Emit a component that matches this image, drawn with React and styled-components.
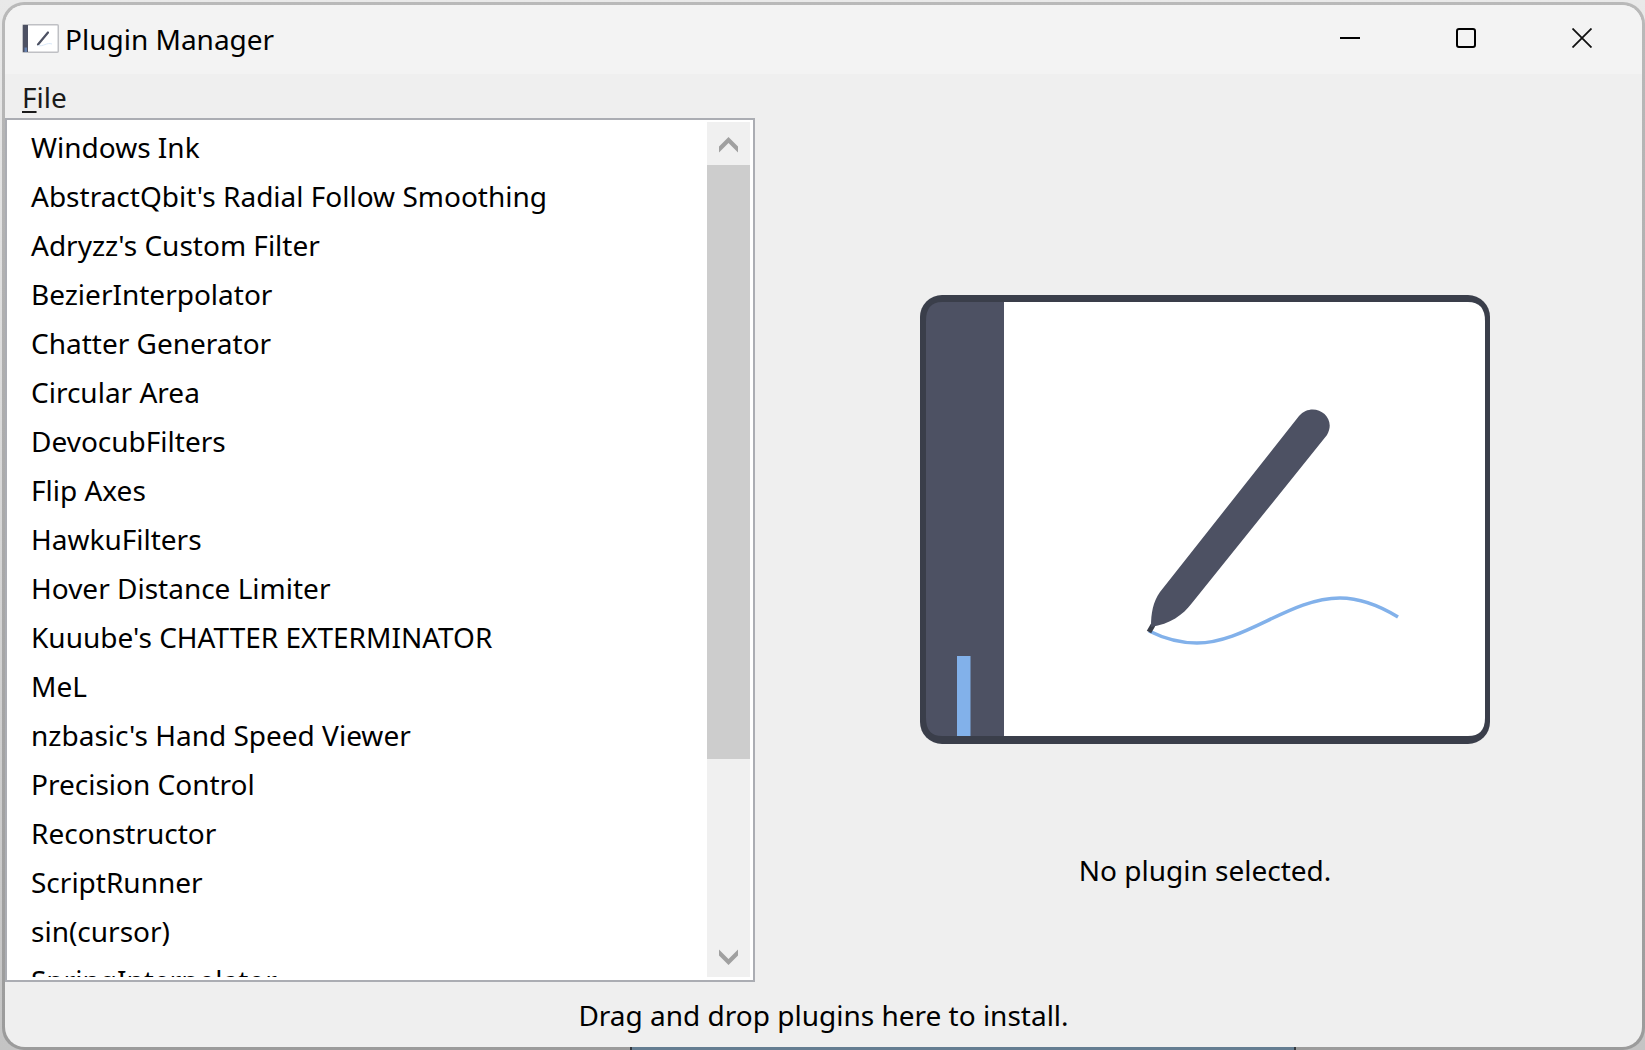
import React from "react";
import styled, { createGlobalStyle } from "styled-components";

const GlobalStyle = createGlobalStyle`
  * { box-sizing: border-box; }
  body { margin: 0; }
`;

const Desktop = styled.div`
  height: 100vh;
  min-height: 480px;
  padding: 2px 0 0 2px;
  background: linear-gradient(#e9e9e9, #c4c4c4);
  font-family: "Noto Sans", "Open Sans", sans-serif;
  font-size: 28px;
  line-height: 40px;
  color: #000;
`;

const Frame = styled.div`
  position: relative;
  height: 100%;
  padding: 3px;
  border-radius: 22px;
  background: linear-gradient(#b9b9b9, #9b9b9b);
`;

const Window = styled.main`
  display: flex;
  flex-direction: column;
  height: 100%;
  overflow: hidden;
  border-radius: 20px;
  background: #efefef;
`;

const TaskEdge = styled.div`
  position: absolute;
  bottom: 0;
  left: 38.25%;
  right: 21.25%;
  height: 3px;
  border: solid #35393f;
  border-width: 0 2px;
  background: #647d91;
`;

const TitleBar = styled.header`
  display: flex;
  flex: none;
  align-items: center;
  height: 69px;
  padding: 0 2px 2px 17px;
  background: #f3f3f3;
`;

const Title = styled.h1`
  flex: 1;
  margin: 0 0 0 6px;
  font: inherit;
`;

const CaptionButton = styled.button`
  display: grid;
  place-items: center;
  width: 116px;
  height: 67px;
  padding: 0 0 2px;
  border: 0;
  background: none;
`;

const MenuBar = styled.nav`
  display: flex;
  flex: none;
  height: 44px;
  padding: 1px 0 0 17px;
`;

const MenuButton = styled.button`
  padding: 0;
  border: 0;
  background: none;
  font: inherit;
  color: #1a1a1a;
  u { text-underline-offset: 3px; text-decoration-thickness: 2px; }
`;

const Content = styled.div`
  display: flex;
  flex: 1;
  min-height: 0;
`;

const ListBox = styled.div`
  display: flex;
  flex: 0 0 750px;
  padding: 2px 3px 3px 2px;
  border: 2px solid #abadb3;
  background: #fff;
`;

const PluginList = styled.ul`
  flex: 1;
  margin: 0;
  padding: 0;
  overflow: hidden;
  list-style: none;
`;

const PluginItem = styled.li`
  height: 49px;
  padding-left: 22px;
  line-height: 50px;
  white-space: nowrap;
`;

const ScrollBar = styled.div`
  display: flex;
  flex-direction: column;
  width: 43px;
  background: #f0f0f0;
`;

const ScrollButton = styled.button`
  display: grid;
  flex: none;
  place-items: center;
  height: 43px;
  padding: 2px 0 0;
  border: 0;
  background: none;
`;

const Track = styled.div`
  flex: 1;
`;

const Thumb = styled.div`
  height: 77.3%;
  background: #cdcdcd;
`;

const Details = styled.section`
  display: flex;
  flex: 1;
  flex-direction: column;
  align-items: center;
  justify-content: center;
  gap: 106px;
  padding: 84px 0 0 13px;
  p { margin: 0; }
`;

const Footer = styled.footer`
  flex: none;
  height: 65px;
  line-height: 66px;
  text-align: center;
`;

const PLUGINS = [
  "Windows Ink",
  "AbstractQbit's Radial Follow Smoothing",
  "Adryzz's Custom Filter",
  "BezierInterpolator",
  "Chatter Generator",
  "Circular Area",
  "DevocubFilters",
  "Flip Axes",
  "HawkuFilters",
  "Hover Distance Limiter",
  "Kuuube's CHATTER EXTERMINATOR",
  "MeL",
  "nzbasic's Hand Speed Viewer",
  "Precision Control",
  "Reconstructor",
  "ScriptRunner",
  "sin(cursor)",
  "SpringInterpolator",
];

function AppIcon() {
  return (
    <svg width="37" height="29" viewBox="0 0 37 29" aria-hidden="true">
      <rect x="0.75" y="0.75" width="35.5" height="27.5" rx="1" fill="#fff" stroke="#bfc0c4" strokeWidth="1.5" />
      <path d="M1 1H6V28H1z" fill="#4d5163" />
      <path d="M2.5 23.500H5V28H2.500z" fill="#6580ad" />
      <path d="M26 8.500L16 20.500" stroke="#4d5163" strokeWidth="2.200" strokeLinecap="round" />
      <path d="M16 21.500C21 23 25 18 30 20" fill="none" stroke="#d9e8f8" strokeWidth="1" />
    </svg>
  );
}

function TabletLogo() {
  return (
    <svg width="570" height="449" viewBox="0 0 570 449" role="img" aria-label="Tablet and pen">
      <rect width="570" height="449" rx="22" fill="#3a3e4a" />
      <path d="M84 7H548Q565 7 565 26V423Q565 441 548 441H84z" fill="#fff" />
      <path d="M84 7H22Q6 7 6 26V423Q6 441 22 441H84z" fill="#4d5163" />
      <path d="M37 361H50.500V441H37z" fill="#82b1ea" />
      <path d="M229 336C243 343 260 348 277 348C325 348 370 303 420 303C441 303 460 311 478 322" fill="none" stroke="#82b1ea" strokeWidth="3.500" />
      <path d="M229 337L233 330" stroke="#3a3e4a" strokeWidth="5" />
      <path d="M379 121C393 105 418 121 407 140L272 308C263 320 250 329 231 332C231 318 233 307 240 297z" fill="#4d5163" />
    </svg>
  );
}

function Chevron({ d }) {
  return (
    <svg width="19" height="16" viewBox="0 0 19 16" aria-hidden="true">
      <path d={d} fill="#a0a0a0" />
    </svg>
  );
}

export default function App() {
  return (
    <Desktop>
      <GlobalStyle />
      <Frame>
        <Window>
          <TitleBar>
            <AppIcon />
            <Title>Plugin Manager</Title>
            <CaptionButton aria-label="Minimize">
              <svg width="20" height="20"><path d="M0 10H20" stroke="#000" strokeWidth="2" /></svg>
            </CaptionButton>
            <CaptionButton aria-label="Maximize">
              <svg width="20" height="20"><rect x="1" y="1" width="18" height="18" rx="2" fill="none" stroke="#000" strokeWidth="2" /></svg>
            </CaptionButton>
            <CaptionButton aria-label="Close">
              <svg width="20" height="20"><path d="M0.500 0.500L19.500 19.500M19.500 0.500L0.500 19.500" stroke="#111" strokeWidth="1.800" /></svg>
            </CaptionButton>
          </TitleBar>
          <MenuBar>
            <MenuButton><u>F</u>ile</MenuButton>
          </MenuBar>
          <Content>
            <ListBox>
              <PluginList>
                {PLUGINS.map((name) => <PluginItem key={name}>{name}</PluginItem>)}
              </PluginList>
              <ScrollBar>
                <ScrollButton aria-label="Scroll up"><Chevron d="M0 9.500L9.500 0L19 9.500V15.500L9.500 6L0 15.500z" /></ScrollButton>
                <Track><Thumb /></Track>
                <ScrollButton aria-label="Scroll down"><Chevron d="M0 6.500L9.500 16L19 6.500V0.500L9.500 10L0 0.500z" /></ScrollButton>
              </ScrollBar>
            </ListBox>
            <Details>
              <TabletLogo />
              <p>No plugin selected.</p>
            </Details>
          </Content>
          <Footer>Drag and drop plugins here to install.</Footer>
        </Window>
        <TaskEdge />
      </Frame>
    </Desktop>
  );
}
